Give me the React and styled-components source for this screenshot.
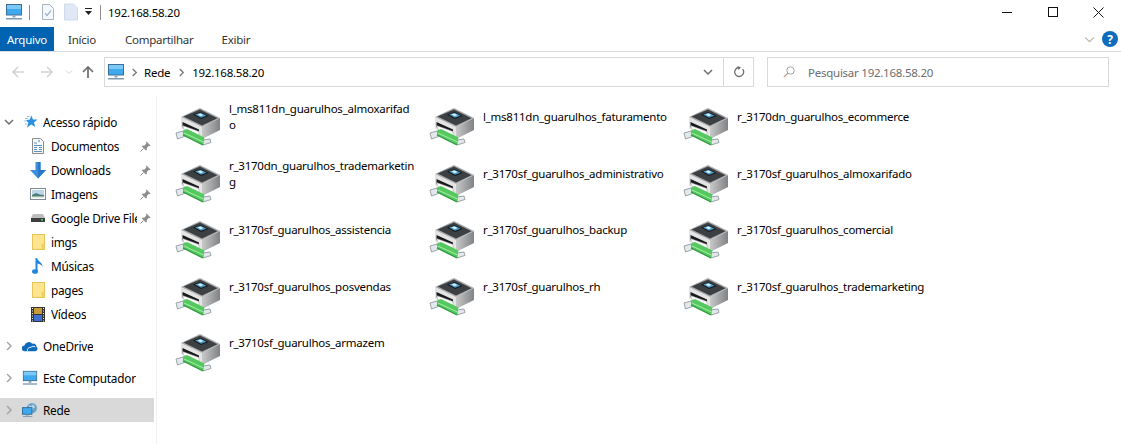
import React from "react";
import styled, { createGlobalStyle } from "styled-components";

const Global = createGlobalStyle`
  html, body { margin: 0; padding: 0; background: #fff; }
  body {
    font-family: "Noto Sans", "Open Sans", sans-serif;
    font-size: 11.5px;
    letter-spacing: -0.25px;
    color: #000;
  }
  * { box-sizing: border-box; }
`;

// explorer wraps long names by character, the \n keeps those breaks where they were
const printers = [
  "l_ms811dn_guarulhos_almoxarifad\no",
  "l_ms811dn_guarulhos_faturamento",
  "r_3170dn_guarulhos_ecommerce",
  "r_3170dn_guarulhos_trademarketin\ng",
  "r_3170sf_guarulhos_administrativo",
  "r_3170sf_guarulhos_almoxarifado",
  "r_3170sf_guarulhos_assistencia",
  "r_3170sf_guarulhos_backup",
  "r_3170sf_guarulhos_comercial",
  "r_3170sf_guarulhos_posvendas",
  "r_3170sf_guarulhos_rh",
  "r_3170sf_guarulhos_trademarketing",
  "r_3710sf_guarulhos_armazem",
];

const MonitorIcon = ({ size = 18 }) => (
  <svg width={size} height={size} viewBox="0 0 18 18">
    <rect x="1.5" y="1.5" width="15" height="10.5" fill="#3fa9ee" stroke="#3b6f96" />
    <rect x="2" y="2" width="14" height="4" fill="#7cc9f7" />
    <rect x="7.5" y="12.5" width="3" height="2" fill="#8da3b3" />
    <rect x="1" y="15" width="16" height="1.5" fill="#7f9bb0" />
  </svg>
);

const DocCheckIcon = () => (
  <svg width="14" height="18" viewBox="0 0 14 18">
    <path d="M1.5 1.5h7l4 4v11h-11z" fill="#f4f7fb" stroke="#a9b4c2" />
    <path d="M4 10l2 2.5 4-5" fill="none" stroke="#8fa6c4" strokeWidth="1.2" />
  </svg>
);

const BlankDocIcon = () => (
  <svg width="14" height="18" viewBox="0 0 14 18">
    <path d="M0.5 1h9l4 4v12h-13z" fill="#dfe8f4" stroke="#d0dbe9" />
  </svg>
);

const ArrowIcon = ({ dir = "left", color = "#d4d4d4" }) => (
  <svg width="14" height="14" viewBox="0 0 14 14">
    <g transform={dir === "right" ? "rotate(180 7 7)" : dir === "up" ? "rotate(90 7 7)" : undefined}>
      <path d="M13 7H2M7 2L2 7l5 5" fill="none" stroke={color} strokeWidth="1.7" />
    </g>
  </svg>
);

const Chevron = ({ dir = "right", color = "#a6a6a6", size = 10, width = 1.5 }) => (
  <svg width={size} height={size} viewBox="0 0 10 10">
    <path
      d={dir === "right" ? "M3 1l4 4-4 4" : "M1 3l4 4 4-4"}
      fill="none"
      stroke={color}
      strokeWidth={width}
    />
  </svg>
);

const StarIcon = () => (
  <svg width="16" height="15" viewBox="0 0 16 15">
    <path d="M9.500 0.500l1.400 3.900 4.600.2-3.500 2.800 1.200 4.600-4-2.600-4.300 3.300 1.500-5-2.400-2.400 3.800-.8z" fill="#2b8fe3" />
    <path d="M3 3.500h3M2 6h2.500M3 9h2.500M5 1.500h2.500" stroke="#8cc6f2" strokeWidth="1" />
  </svg>
);

const DocumentsIcon = () => (
  <svg width="12" height="16" viewBox="0 0 12 16">
    <path d="M.5 .5h8l3 3v12H.5z" fill="#f7f7f7" stroke="#8b8b8b" />
    <path d="M2 5h3M2 7.500h8M2 9.500h3M7 9.500h3M2 11.500h3M7 11.500h3M2 13.500h8" stroke="#5b8fbd" />
    <path d="M6 3h2" stroke="#2f7fc1" />
  </svg>
);

const DownloadIcon = () => (
  <svg width="16" height="17" viewBox="0 0 16 17">
    <path d="M5.500 0h5v8H16l-8 8.500L0 8h5.500z" fill="#3b8fdf" />
    <path d="M8 0h2.500v8H16l-8 8.500z" fill="#2a78c6" />
  </svg>
);

const ImagesIcon = () => (
  <svg width="16" height="12" viewBox="0 0 16 12">
    <rect x=".5" y=".5" width="15" height="11" fill="#fff" stroke="#7f8a95" />
    <rect x="2" y="2" width="12" height="8" fill="#bcd7e8" />
    <path d="M2 7l4-2 4 1.500 4 .5v3H2z" fill="#4f7f78" />
    <path d="M2 8.500h12V10H2z" fill="#e3e8e0" />
  </svg>
);

const DriveIcon = () => (
  <svg width="14" height="8" viewBox="0 0 14 8">
    <path d="M2 0h10l2 4v4H0V4z" fill="#bdbdbd" />
    <rect y="4" width="14" height="4" fill="#3f3f3f" />
    <rect x="10" y="5" width="2" height="1.500" fill="#4cd964" />
  </svg>
);

const FolderIcon = () => (
  <svg width="13" height="16" viewBox="0 0 13 16">
    <rect x=".5" y=".5" width="12" height="15" fill="#fde58f" stroke="#e8c45a" />
    <rect x="10" y="10" width="2.500" height="5.500" fill="#f6d264" stroke="#e8c45a" strokeWidth=".5" />
  </svg>
);

const MusicIcon = () => (
  <svg width="12" height="16" viewBox="0 0 12 16">
    <path d="M3.500 0h1.500c.3 3 6 4.500 5.500 9C10 7 8 6 5.500 5.500V13.500H3.500z" fill="#1f87e0" />
    <ellipse cx="3" cy="13.500" rx="3" ry="2.300" fill="#1f87e0" />
  </svg>
);

const VideoIcon = () => (
  <svg width="14" height="15" viewBox="0 0 14 15">
    <rect width="14" height="15" fill="#333" />
    <rect x="3" y="1" width="8" height="6" fill="#c79a3a" />
    <rect x="3" y="8" width="8" height="6" fill="#3f6fd1" />
    <path d="M1 1.500h1M1 4h1M1 6.500h1M1 9h1M1 11.500h1M1 14h1M12 1.500h1M12 4h1M12 6.500h1M12 9h1M12 11.500h1M12 14h1" stroke="#eee" />
  </svg>
);

const CloudIcon = () => (
  <svg width="16" height="12" viewBox="0 0 17 12">
    <path d="M3 11.500a3 3 0 0 1-.5-6A5 5 0 0 1 11 3.500a3.500 3.500 0 0 1 4.500 3.500A2.500 2.500 0 0 1 14 11.500z" fill="#0f6cbd" />
    <path d="M6 11.500c-1-2 1-4.500 3.500-4 1-1.500 3-1.500 4.500-.5" fill="none" stroke="#fff" strokeWidth="1" />
  </svg>
);

const NetworkIcon = () => (
  <svg width="16" height="16" viewBox="0 0 17 16">
    <circle cx="10.500" cy="6" r="5.500" fill="#6ba4c9" />
    <path d="M7 3l3 1 2-2 2 3-3 2-1 3-2-3z" fill="#b9d4e6" />
    <rect x=".5" y="5.500" width="10" height="7" fill="#3fa9ee" stroke="#2f6d99" />
    <rect x="4" y="13" width="3" height="1" fill="#7f9bb0" />
    <rect x="1" y="14.500" width="10" height="1" fill="#7f9bb0" />
  </svg>
);

const PinIcon = () => (
  <svg width="11" height="11" viewBox="0 0 11 11">
    <path d="M6.500 .5l4 4-1 .6-.8-.2-2 2.200.2 1.800-1 .6L1.900 5.500l.6-1 1.800.2 2-2.200-.3-1z" fill="#8c8c8c" />
    <path d="M3.500 7.500L.5 10.500" stroke="#8c8c8c" />
  </svg>
);

const PrinterIcon = () => (
  <svg width="48" height="48" viewBox="0 0 48 48">
    <defs>
      <linearGradient id="printerSide" x1="0" y1="0" x2="1" y2="0">
        <stop offset="0" stopColor="#c9c9c9" />
        <stop offset="1" stopColor="#808285" />
      </linearGradient>
    </defs>
    {/* body */}
    <path d="M6 15l21 10v12L6 26.500z" fill="#e4e4e4" />
    <path d="M27 25l18-9v12L27 37z" fill="url(#printerSide)" />
    <path d="M6 15L25 6l20 10-18 9z" fill="#a8a9ab" />
    <path d="M8.500 14.500L25 7.500l17.500 8.700L27 23.500z" fill="#3d4043" />
    {/* panel on top */}
    <path d="M18 12.500l7.500-2.500 8 4-7.500 3z" fill="#15181a" />
    <path d="M20 12.500l5.500-1.700 6 3-5.500 2z" fill="#4a9bd0" />
    <path d="M22.500 12.500l3-.9 3 1.500-3 1.100z" fill="#d5edf8" />
    {/* paper slot and tray */}
    <path d="M7.500 20l16.500 7.500v5L7.500 25z" fill="#17191b" />
    <path d="M7.500 23.500l16.500 6V34L9 27.500z" fill="#fdfdfd" stroke="#a5a5a5" strokeWidth=".5" />
    {/* network connector */}
    <path d="M1 31l7-2 1.500 5.500L2.500 37z" fill="#e3e8ea" stroke="#84919a" strokeWidth=".8" />
    <path d="M28 38l7-1 1 3.500-8 2.500z" fill="#e3e8ea" stroke="#84919a" strokeWidth=".8" />
    <path d="M8 28.500l4-1.500 17.500 8.500-1.500 7.500-20-10z" fill="#55c95f" />
    <path d="M9 31l19.500 9" fill="none" stroke="#a6eda9" strokeWidth="1" />
    <path d="M8 33l20 10" fill="none" stroke="#2a9a3c" strokeWidth="1.300" />
  </svg>
);

const Page = styled.div`
  width: 100%;
  height: 100vh;
  overflow: hidden;
  display: flex;
  flex-direction: column;
`;

const TitleBar = styled.div`
  height: 27px;
  display: flex;
  align-items: center;
  padding: 0 0 3px 5px;
`;

const QuickTool = styled.span`
  display: inline-flex;
  align-items: center;
  margin-right: ${(p) => p.$gap || 0}px;
`;

const TitleSep = styled.span`
  width: 1px;
  height: 15px;
  background: #8c8c8c;
  margin-right: ${(p) => p.$gap}px;
`;

const WindowTitle = styled.span`
  flex: 1;
`;

const WindowBtn = styled.span`
  width: 45.500px;
  height: 24px;
  display: flex;
  align-items: center;
  justify-content: center;
`;

const WindowBtns = styled.div`
  display: flex;
`;

const RibbonTabs = styled.div`
  height: 25px;
  display: flex;
  align-items: stretch;
  border-bottom: 1px solid #dadbdc;
  padding-right: 3px;
`;

const FileTab = styled.div`
  width: 54px;
  background: #0063b1;
  color: #fff;
  display: flex;
  align-items: center;
  justify-content: center;
`;

const Tab = styled.div`
  display: flex;
  align-items: center;
  margin-left: ${(p) => p.$left}px;
  color: #333;
`;

const RibbonRight = styled.div`
  margin-left: auto;
  display: flex;
  align-items: center;
  gap: 7px;
`;

const HelpBadge = styled.span`
  width: 16px;
  height: 16px;
  border-radius: 50%;
  background: #0f6cbd;
  color: #fff;
  font-weight: 700;
  font-size: 12px;
  display: flex;
  align-items: center;
  justify-content: center;
`;

const NavRow = styled.div`
  height: 44px;
  display: flex;
  align-items: flex-start;
  padding: 5px 12px 0 11px;
`;

const NavArrows = styled.div`
  width: 93px;
  height: 30px;
  display: flex;
  align-items: center;
`;

const NavSlot = styled.span`
  display: inline-flex;
  margin-right: ${(p) => p.$gap}px;
`;

const AddressBox = styled.div`
  width: 650px;
  height: 30px;
  border: 1px solid #d9d9d9;
  display: flex;
  align-items: center;
  padding-left: 2px;
`;

const Crumb = styled.span`
  margin-right: ${(p) => p.$gap}px;
  display: inline-flex;
`;

const AddressEnd = styled.div`
  margin-left: auto;
  display: flex;
  height: 100%;
  align-items: center;
`;

const AddressBtn = styled.span`
  width: ${(p) => p.$w}px;
  height: 100%;
  display: flex;
  align-items: center;
  justify-content: center;
  border-left: ${(p) => (p.$line ? "1px solid #d9d9d9" : "none")};
`;

const SearchBox = styled.div`
  width: 342px;
  height: 30px;
  margin-left: 13px;
  border: 1px solid #d9d9d9;
  display: flex;
  align-items: center;
  padding-left: 15px;
  gap: 13px;
  color: #6d6d6d;
`;

const Body = styled.div`
  flex: 1;
  display: flex;
  min-height: 0;
`;

const Sidebar = styled.nav`
  width: 157px;
  padding-top: 14px;
  padding-right: 2px;
  border-right: 1px solid #f0f0f0;
  font-size: 11.800px;
`;

const NavItem = styled.div`
  height: 24px;
  display: flex;
  align-items: center;
  margin-top: ${(p) => (p.$section ? 8 : 0)}px;
  background: ${(p) => (p.$active ? "#d9d9d9" : "transparent")};
  position: relative;
`;

const Expander = styled.span`
  width: 22px;
  padding-left: 4px;
  display: flex;
  flex-shrink: 0;
`;

const ItemIcon = styled.span`
  width: 16px;
  margin-left: ${(p) => (p.$child ? 30 : 0)}px;
  margin-right: 5px;
  display: flex;
  flex-shrink: 0;
  justify-content: center;
`;

const ItemLabel = styled.span`
  white-space: nowrap;
  overflow: hidden;
  max-width: ${(p) => (p.$pinned ? 86 : 110)}px;
`;

const Pin = styled.span`
  position: absolute;
  left: 140px;
  top: 7px;
  display: flex;
`;

const Content = styled.main`
  flex: 1;
  padding-left: 18px;
  display: grid;
  grid-template-columns: repeat(3, 254px);
  grid-auto-rows: 56.500px;
  align-content: start;
`;

const Tile = styled.div`
  display: flex;
  align-items: flex-start;
`;

const TileIcon = styled.span`
  width: 48px;
  height: 48px;
  margin-top: 6px;
  flex-shrink: 0;
`;

const TileLabel = styled.span`
  width: 196px;
  height: 42px;
  margin-left: 6px;
  display: flex;
  align-items: center;
  white-space: pre-line;
  line-height: 16px;
`;

const quick = [
  { label: "Documentos", icon: <DocumentsIcon />, pinned: true },
  { label: "Downloads", icon: <DownloadIcon />, pinned: true },
  { label: "Imagens", icon: <ImagesIcon />, pinned: true },
  { label: "Google Drive File", icon: <DriveIcon />, pinned: true },
  { label: "imgs", icon: <FolderIcon /> },
  { label: "Músicas", icon: <MusicIcon /> },
  { label: "pages", icon: <FolderIcon /> },
  { label: "Vídeos", icon: <VideoIcon /> },
];

export default function App() {
  return (
    <Page>
      <Global />
      <TitleBar>
        <QuickTool $gap={6}><MonitorIcon /></QuickTool>
        <TitleSep $gap={11} />
        <QuickTool $gap={9}><DocCheckIcon /></QuickTool>
        <QuickTool $gap={6}><BlankDocIcon /></QuickTool>
        <QuickTool $gap={7}>
          <svg width="9" height="8" viewBox="0 0 9 8">
            <path d="M1 0.500h7" stroke="#222" />
            <path d="M1 3h7L4.500 7z" fill="#222" />
          </svg>
        </QuickTool>
        <TitleSep $gap={7} />
        <WindowTitle>192.168.58.20</WindowTitle>
        <WindowBtns>
          <WindowBtn>
            <svg width="10" height="10" viewBox="0 0 10 10"><path d="M0 5.500h10" stroke="#111" /></svg>
          </WindowBtn>
          <WindowBtn>
            <svg width="10" height="10" viewBox="0 0 10 10"><rect x=".5" y=".5" width="9" height="9" fill="none" stroke="#111" /></svg>
          </WindowBtn>
          <WindowBtn>
            <svg width="11" height="11" viewBox="0 0 11 11"><path d="M.5 .5l10 10M10.500 .5l-10 10" stroke="#111" /></svg>
          </WindowBtn>
        </WindowBtns>
      </TitleBar>
      <RibbonTabs>
        <FileTab>Arquivo</FileTab>
        <Tab $left={14}>Início</Tab>
        <Tab $left={29}>Compartilhar</Tab>
        <Tab $left={28}>Exibir</Tab>
        <RibbonRight>
          <Chevron dir="down" color="#b5b5b5" size={11} width={1} />
          <HelpBadge>?</HelpBadge>
        </RibbonRight>
      </RibbonTabs>
      <NavRow>
        <NavArrows>
          <NavSlot $gap={15}><ArrowIcon /></NavSlot>
          <NavSlot $gap={11}><ArrowIcon dir="right" /></NavSlot>
          <NavSlot $gap={8}><Chevron dir="down" color="#d4d4d4" size={8} width={1.2} /></NavSlot>
          <NavSlot $gap={0}><ArrowIcon dir="up" color="#6e6e6e" /></NavSlot>
        </NavArrows>
        <AddressBox>
          <Crumb $gap={5}><MonitorIcon /></Crumb>
          <Crumb $gap={5}><Chevron color="#7a7a7a" size={9} /></Crumb>
          <Crumb $gap={7}>Rede</Crumb>
          <Crumb $gap={6}><Chevron color="#7a7a7a" size={9} /></Crumb>
          <Crumb $gap={0}>192.168.58.20</Crumb>
          <AddressEnd>
            <AddressBtn $w={30}><Chevron dir="down" color="#6e6e6e" size={10} /></AddressBtn>
            <AddressBtn $w={30} $line>
              <svg width="12" height="12" viewBox="0 0 12 12">
                <path d="M9.700 3.200A4.500 4.500 0 1 1 6 1.500" fill="none" stroke="#6e6e6e" strokeWidth="1.300" />
                <path d="M4.500 0l3.500 1.500-2.500 2.500z" fill="#6e6e6e" />
              </svg>
            </AddressBtn>
          </AddressEnd>
        </AddressBox>
        <SearchBox>
          <svg width="12" height="12" viewBox="0 0 12 12">
            <circle cx="7.500" cy="4.500" r="3.700" fill="none" stroke="#a5a5a5" />
            <path d="M4.800 7.200L.8 11.200" stroke="#c09a7a" strokeWidth="1.200" />
          </svg>
          <span>Pesquisar 192.168.58.20</span>
        </SearchBox>
      </NavRow>
      <Body>
        <Sidebar>
          <NavItem>
            <Expander><Chevron dir="down" color="#6e6e6e" /></Expander>
            <ItemIcon><StarIcon /></ItemIcon>
            <ItemLabel>Acesso rápido</ItemLabel>
          </NavItem>
          {quick.map((item) => (
            <NavItem key={item.label}>
              <ItemIcon $child>{item.icon}</ItemIcon>
              <ItemLabel $pinned={item.pinned}>{item.label}</ItemLabel>
              {item.pinned && <Pin><PinIcon /></Pin>}
            </NavItem>
          ))}
          <NavItem $section>
            <Expander><Chevron /></Expander>
            <ItemIcon><CloudIcon /></ItemIcon>
            <ItemLabel>OneDrive</ItemLabel>
          </NavItem>
          <NavItem $section>
            <Expander><Chevron /></Expander>
            <ItemIcon><MonitorIcon size={16} /></ItemIcon>
            <ItemLabel>Este Computador</ItemLabel>
          </NavItem>
          <NavItem $section $active>
            <Expander><Chevron /></Expander>
            <ItemIcon><NetworkIcon /></ItemIcon>
            <ItemLabel>Rede</ItemLabel>
          </NavItem>
        </Sidebar>
        <Content>
          {printers.map((name) => (
            <Tile key={name}>
              <TileIcon><PrinterIcon /></TileIcon>
              <TileLabel>{name}</TileLabel>
            </Tile>
          ))}
        </Content>
      </Body>
    </Page>
  );
}
